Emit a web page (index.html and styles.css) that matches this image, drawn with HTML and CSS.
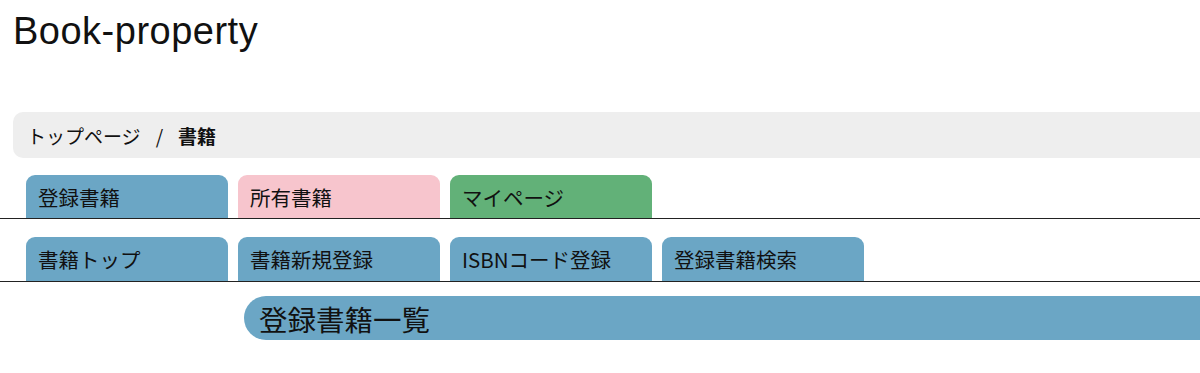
FILE: index.html
```html
<!DOCTYPE html>
<html lang="ja">
<head>
    <meta charset="UTF-8">
    <meta name="viewport" content="width=device-width, initial-scale=1.0">
    <title>Book-property</title>
    <link rel="stylesheet" href="styles.css">
</head>
<body>
    <h1 class="site-title">Book-property</h1>

    <!-- パンくず -->
    <nav class="breadcrumb">
        <span>トップページ</span>
        <span class="sep">/</span>
        <span class="current">書籍</span>
    </nav>

    <!-- メインタブ -->
    <ul class="tabs">
        <li class="tab tab-blue">登録書籍</li>
        <li class="tab tab-pink">所有書籍</li>
        <li class="tab tab-green">マイページ</li>
    </ul>

    <!-- サブタブ -->
    <ul class="tabs sub-tabs">
        <li class="tab tab-blue">書籍トップ</li>
        <li class="tab tab-blue">書籍新規登録</li>
        <li class="tab tab-blue">ISBNコード登録</li>
        <li class="tab tab-blue">登録書籍検索</li>
    </ul>

    <h2 class="page-heading">登録書籍一覧</h2>
</body>
</html>
```

FILE: styles.css
```css
body {
    margin: 0;
    padding: 0;
    overflow: hidden;
    font-family: "Noto Sans CJK JP", "Liberation Sans", sans-serif;
    color: #111;
    background: #fff;
}

.site-title {
    margin: 0;
    padding: 9px 0 0 13px;
    height: 102px;
    box-sizing: border-box;
    font-family: "Liberation Sans", "Noto Sans CJK JP", sans-serif;
    font-size: 38px;
    font-weight: normal;
    line-height: 44px;
    letter-spacing: 0.5px;
}

/* パンくず */
.breadcrumb {
    margin: 10px -20px 0 13px;
    height: 46px;
    padding-left: 14px;
    display: flex;
    align-items: center;
    gap: 15px;
    background: #eee;
    border-radius: 10px 0 0 10px;
    font-size: 19px;
}

.breadcrumb .current {
    font-weight: bold;
}

/* タブ */
.tabs {
    list-style: none;
    margin: 17px 0 0 0;
    padding: 0 0 0 26px;
    display: flex;
    gap: 10px;
    border-bottom: 1px solid #222;
}

.sub-tabs {
    margin-top: 18px;
}

.sub-tabs .tab {
    height: 44px;
}

.tab {
    width: 202px;
    height: 43px;
    box-sizing: border-box;
    padding-left: 12px;
    display: flex;
    align-items: center;
    border-radius: 9px 9px 0 0;
    font-size: 20.5px;
}

.tab-blue { background: #6ba6c5; }
.tab-pink { background: #f7c5cd; }
.tab-green { background: #62b178; }

/* 見出し */
.page-heading {
    margin: 14px -30px 0 244px;
    height: 44px;
    padding-left: 15px;
    display: flex;
    align-items: center;
    background: #6ba6c5;
    border-radius: 22px 0 0 22px;
    font-size: 28.5px;
    font-weight: normal;
}
```
